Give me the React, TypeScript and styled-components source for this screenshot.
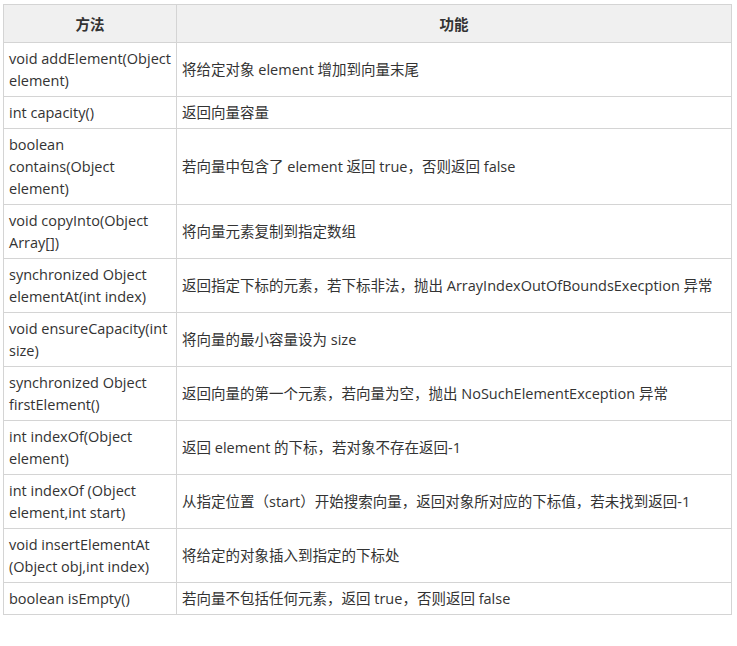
import styled, { createGlobalStyle } from "styled-components";

const Global = createGlobalStyle`
  body { margin: 0; background: #fff; }
`;

const Table = styled.table`
  margin: 4px 0 0 3px;
  width: 729px;
  border-collapse: collapse;
  font-family: "Open Sans", "Noto Sans CJK SC", sans-serif;
  font-size: 14.5px;
  color: #333;
  table-layout: fixed;
`;

const Th = styled.th<{ $w?: number }>`
  background: #f0f0f0;
  border: 1px solid #d4d4d4;
  height: 37px;
  padding: 0 6px;
  font-weight: bold;
  text-align: center;
  width: ${(p) => (p.$w ? `${p.$w}px` : "auto")};
`;

const Td = styled.td`
  border: 1px solid #d4d4d4;
  padding: 5px 4px 4px 5px;
  line-height: 22px;
  vertical-align: middle;
  word-break: normal;
`;

const rows: [string, string][] = [
  ["void addElement(Object element)", "将给定对象 element 增加到向量末尾"],
  ["int capacity()", "返回向量容量"],
  ["boolean contains(Object element)", "若向量中包含了 element 返回 true，否则返回 false"],
  ["void copyInto(Object Array[])", "将向量元素复制到指定数组"],
  ["synchronized Object elementAt(int index)", "返回指定下标的元素，若下标非法，抛出 ArrayIndexOutOfBoundsExecption 异常"],
  ["void ensureCapacity(int size)", "将向量的最小容量设为 size"],
  ["synchronized Object firstElement()", "返回向量的第一个元素，若向量为空，抛出 NoSuchElementException 异常"],
  ["int indexOf(Object element)", "返回 element 的下标，若对象不存在返回-1"],
  ["int indexOf (Object element,int start)", "从指定位置（start）开始搜索向量，返回对象所对应的下标值，若未找到返回-1"],
  ["void insertElementAt (Object obj,int index)", "将给定的对象插入到指定的下标处"],
  ["boolean isEmpty()", "若向量不包括任何元素，返回 true，否则返回 false"],
];

export default function App() {
  return (
    <>
      <Global />
      <Table>
        <thead>
          <tr>
            <Th $w={160}>方法</Th>
            <Th>功能</Th>
          </tr>
        </thead>
        <tbody>
          {rows.map(([m, d]) => (
            <tr key={m}>
              <Td>{m}</Td>
              <Td>{d}</Td>
            </tr>
          ))}
        </tbody>
      </Table>
    </>
  );
}
